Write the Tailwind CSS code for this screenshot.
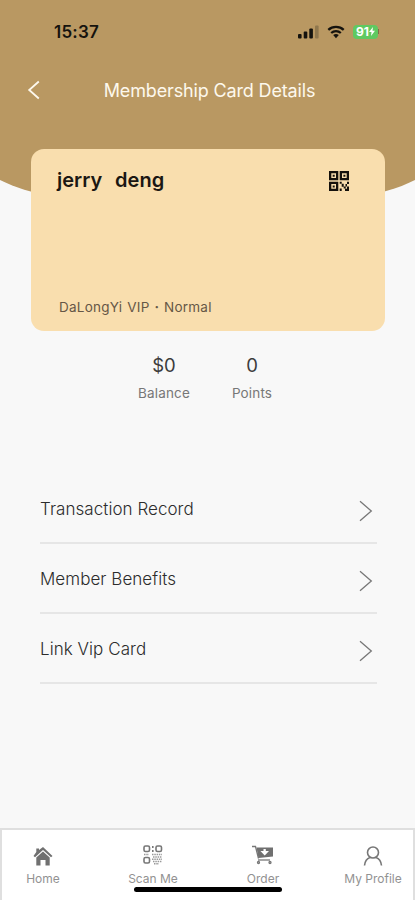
<!DOCTYPE html>
<html lang="en">
<head>
<meta charset="utf-8">
<meta name="viewport" content="width=device-width, initial-scale=1">
<title>Membership Card Details</title>
<script src="https://cdn.jsdelivr.net/npm/@tailwindcss/browser@4"></script>
</head>
<body class="bg-[#f8f8f8] font-['Inter','Liberation_Sans',sans-serif] overflow-hidden">
<div class="relative isolate w-[415px] h-[900px] flex flex-col overflow-hidden">
  <svg class="absolute inset-x-0 top-0 -z-10" width="415" height="230" viewBox="0 0 415 230"><path d="M0 0H415V180C375 200 320 205 207.500 205S40 200 0 180Z" fill="#b99862"/></svg>

  <!-- Status bar -->
  <div class="h-[62px] flex items-center justify-between pl-[54px] pr-[36px] pt-[1px] text-[#15130e]">
    <span class="text-[17px] leading-6 font-semibold tracking-[0.2px]">15:37</span>
    <div class="flex items-center gap-[8px]">
      <svg width="21" height="14" viewBox="0 0 21 14" fill="currentColor"><rect x="0" y="9" width="3.600" height="4.500" rx="1"/><rect x="5.700" y="6.500" width="3.600" height="7" rx="1"/><rect x="11.300" y="3.500" width="3.600" height="10" rx="1"/><rect x="17" y="0.500" width="3.600" height="13" rx="1" opacity=".25"/></svg>
      <svg width="18" height="14" viewBox="0 0 18 14" fill="none" stroke="currentColor" stroke-width="2.300"><path d="M1.300 4.800C5.500.9 12.500.9 16.700 4.800"/><path d="M4.200 8C6.900 5.600 11.100 5.600 13.800 8"/><path d="M6.200 10Q9 7.800 11.800 10L9 13.200Z" fill="currentColor" stroke="none"/></svg>
      <div class="flex items-center">
        <div class="w-[25px] h-[14px] rounded-[4px] bg-[#5fc961] flex items-center justify-center text-white">
          <span class="text-[12px] leading-none font-bold">91</span>
          <svg width="6" height="9" viewBox="0 0 6 9" fill="currentColor"><path d="M4 0L0 5H2.500L2 9L6 3.800H3.500Z"/></svg>
        </div>
        <div class="w-[1px] h-[5px] bg-[#806b47]"></div>
      </div>
    </div>
  </div>

  <!-- Title bar -->
  <header class="h-[56px] grid grid-cols-[68px_1fr_64px] items-center text-[#fdf8ed]">
    <svg class="ml-[27px]" width="14" height="20" viewBox="0 0 14 20" fill="none" stroke="currentColor" stroke-width="1.800"><path d="M11.800 1.500L2.200 10L11.800 18.500"/></svg>
    <h1 class="pt-[1px] text-center text-[18px] leading-6 tracking-[-0.15px] whitespace-nowrap">Membership Card Details</h1>
  </header>

  <!-- Membership card -->
  <section class="mt-[31px] ml-[31px] w-[354px] h-[182px] rounded-[13px] bg-[#f9deae] flex flex-col justify-between pl-[26px] pr-[36px] pt-[19px] pb-[14px]">
    <div class="flex items-center justify-between">
      <h2 class="text-[20px] leading-6 font-semibold text-[#1b1713] [word-spacing:1.4px] whitespace-pre">jerry  deng</h2>
      <svg class="mt-[1px]" width="20" height="20" viewBox="0 0 20 20" fill="#15110c"><path fill-rule="evenodd" d="M0 0H9.300V9.300H0ZM2.300 2.300V7H7V2.300ZM10.700 0H20V9.300H10.700ZM13 2.300V7H17.700V2.300ZM0 10.700H9.300V20H0ZM2.300 13V17.700H7V13Z"/><path d="M3.700 3.700h2v2h-2zM14.400 3.700h2v2h-2zM3.700 14.400h2v2h-2zM10.700 10.700h2v2h-2zM12.700 12.700h2v3h-2zM10.700 17.500h2v2.500h-2zM14.700 15.500h2v2h-2zM18 10.700h2v2.300h-2zM16.500 13h1.500v2.500h-1.500zM18 15.500h2V20h-4v-2.300h2z"/></svg>
    </div>
    <p class="pl-[2px] text-[13.5px] leading-5 tracking-[0.25px] text-[#665746] [word-spacing:0.8px] whitespace-pre">DaLongYi VIP <b>·</b> Normal</p>
  </section>

  <!-- Account totals -->
  <section class="mt-[22px] ml-[120px] flex text-center">
    <div class="w-[88px]"><div class="text-[18.500px] leading-6 text-[#3c3c3c]">$0</div><div class="mt-[6px] text-[13.500px] leading-5 tracking-[0.150px] text-[#777]">Balance</div></div>
    <div class="w-[88px]"><div class="text-[18.500px] leading-6 text-[#3c3c3c]">0</div><div class="mt-[6px] text-[13.500px] leading-5 tracking-[0.150px] text-[#777]">Points</div></div>
  </section>

  <!-- Links -->
  <nav class="mt-[71px] ml-[40px] w-[337px] text-[17px] leading-6 font-light tracking-[0.05px] text-[#2c2c2c]">
    <div class="h-[70px] flex items-center justify-between border-b-2 border-[#e6e6e6] pr-[4px]"><span class="pt-[2px]">Transaction Record</span><svg class="mt-[5px]" width="14" height="22" viewBox="0 0 14 22" fill="none" stroke="#777" stroke-width="1.300"><path d="M1 1.300L12.300 11L1 20.700"/></svg></div>
    <div class="h-[70px] flex items-center justify-between border-b-2 border-[#e6e6e6] pr-[4px]"><span class="pt-[2px]">Member Benefits</span><svg class="mt-[5px]" width="14" height="22" viewBox="0 0 14 22" fill="none" stroke="#777" stroke-width="1.300"><path d="M1 1.300L12.300 11L1 20.700"/></svg></div>
    <div class="h-[70px] flex items-center justify-between border-b-2 border-[#e6e6e6] pr-[4px]"><span class="pt-[2px]">Link Vip Card</span><svg class="mt-[5px]" width="14" height="22" viewBox="0 0 14 22" fill="none" stroke="#777" stroke-width="1.300"><path d="M1 1.300L12.300 11L1 20.700"/></svg></div>
  </nav>

  <!-- Tab bar -->
  <footer class="relative mt-auto h-[72px] bg-white border-t-2 border-x-2 border-[#dfdfdf] flex justify-between pl-[1px] text-[12px] leading-4 text-[#929292] text-center">
    <div class="w-[80px] pt-[16px] flex flex-col items-center gap-[5px]">
      <svg width="20" height="20" viewBox="0 0 20 20" fill="#707070"><path d="M3.300 6V2.500H6V4L10 1L19.500 10L18 11.200L10 4L2 11.200L.5 10Z"/><path d="M10 5.500L16.700 11.500V19.500H12.500V14H7.500V19.500H3.300V11.500Z"/></svg>
      <span class="whitespace-nowrap">Home</span>
    </div>
    <div class="w-[80px] pt-[15px] flex flex-col items-center gap-[6px]">
      <svg width="20" height="20" viewBox="0 0 20 20" fill="none" stroke="#777" stroke-width="1.600"><rect x="1" y="1" width="5.500" height="5.500" rx="1.500"/><rect x="13" y="1" width="5.500" height="5.500" rx="1.500"/><rect x="1" y="12.500" width="5.500" height="5.500" rx="1.500"/><path d="M9.800 1v2M9.800 5v2"/><path stroke="#999" stroke-width="1.500" stroke-dasharray="1.500 .8" d="M1 9.600h5M9 9.600h10M10 12h9M9 14.300h10M10 16.600h9M11 18.800h5"/></svg>
      <span class="whitespace-nowrap">Scan Me</span>
    </div>
    <div class="w-[80px] pt-[15px] flex flex-col items-center gap-[6px]">
      <svg width="22" height="20" viewBox="0 0 22 20" fill="none" stroke="#777" stroke-width="1.300"><path d="M0 1.500H3.500L6.500 13.500"/><path fill="#707070" stroke="none" d="M4.500 2.500H21V11.500L6.500 13Z"/><path d="M6 15H18"/><circle cx="6.500" cy="17.500" r="1"/><circle cx="18" cy="17.500" r="1"/><path fill="#fff" stroke="none" d="M11.500 4H13.800V6H17L12.700 10.500L8.400 6H11.500Z"/></svg>
      <span class="whitespace-nowrap">Order</span>
    </div>
    <div class="w-[80px] pt-[16px] flex flex-col items-center gap-[5px]">
      <svg width="20" height="20" viewBox="0 0 20 20" fill="none" stroke="#777" stroke-width="1.600"><circle cx="10" cy="6.500" r="5.500"/><path d="M1.500 19.500C2 15 4 12.500 7 11.500M13 11.500C16 12.500 18 15 18.500 19.500"/></svg>
      <span class="whitespace-nowrap">My Profile</span>
    </div>
    <div class="absolute left-[132px] top-[57px] w-[148px] h-[5px] rounded-full bg-black"></div>
  </footer>
</div>
</body>
</html>
